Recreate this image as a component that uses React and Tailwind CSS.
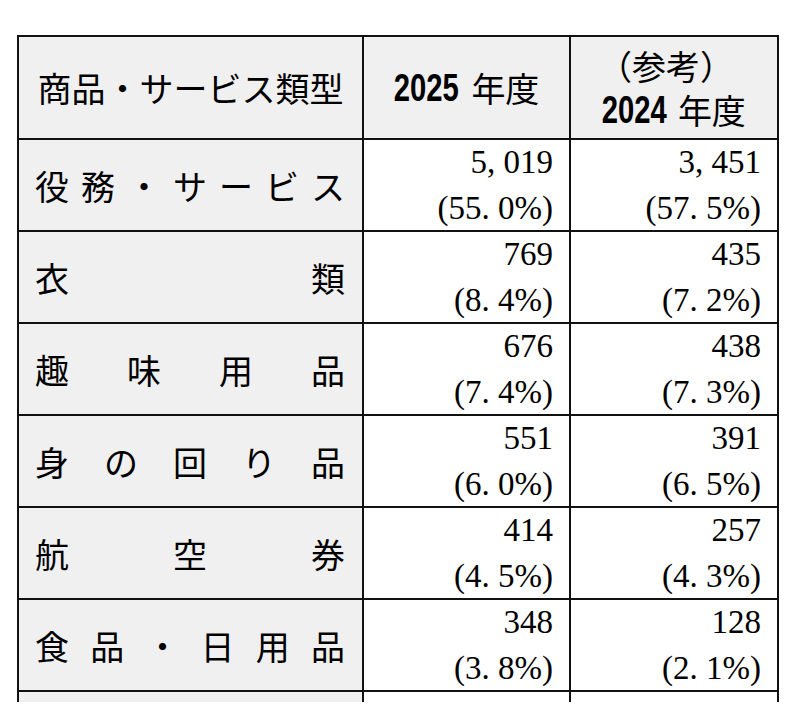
const rows = [
  { label: ['役', '務', '・', 'サ', 'ー', 'ビ', 'ス'], a: '5, 019', ap: ['55', '0'], b: '3, 451', bp: ['57', '5'] },
  { label: ['衣', '類'], a: '769', ap: ['8', '4'], b: '435', bp: ['7', '2'] },
  { label: ['趣', '味', '用', '品'], a: '676', ap: ['7', '4'], b: '438', bp: ['7', '3'] },
  { label: ['身', 'の', '回', 'り', '品'], a: '551', ap: ['6', '0'], b: '391', bp: ['6', '5'] },
  { label: ['航', '空', '券'], a: '414', ap: ['4', '5'], b: '257', bp: ['4', '3'] },
  { label: ['食', '品', '・', '日', '用', '品'], a: '348', ap: ['3', '8'], b: '128', bp: ['2', '1'] },
];

const gothic = "font-['Noto_Sans_CJK_JP',sans-serif]";
const mincho = "font-['Liberation_Serif','Noto_Sans_CJK_JP',serif]";

// condensed year digits
const Year = ({ children }) => (
  <span className="-ml-[22px] inline-block origin-right scale-x-[0.75] font-['Liberation_Sans',sans-serif] text-[39px] font-bold leading-none">
    {children}
  </span>
);

const Num = ({ value, pct }) => (
  <div className={`flex flex-col items-end justify-center border-r-2 border-b-2 border-[#111] bg-white pr-[16px] text-[33px] leading-[46px] text-black ${mincho}`}>
    <span>{value}</span>
    <span>
      ({pct[0]}
      <span className="inline-block w-[0.5em]">.</span>
      {pct[1]}%)
    </span>
  </div>
);

export default function App() {
  return (
    <div className="h-[719px] w-[800px] bg-white">
      <div className="h-[702px] overflow-hidden pl-[17px] pt-[35px]">
        <div className="grid w-[762px] grid-cols-[345px_207px_208px] grid-rows-[103px_repeat(7,92px)] border-l-2 border-t-2 border-[#111] text-black">
          <div className={`flex items-center justify-center border-r-2 border-b-2 border-[#111] bg-[#f0f0f0] text-[34px] ${gothic}`}>
            商品・サービス類型
          </div>
          <div className={`flex items-center justify-center border-r-2 border-b-2 border-[#111] bg-[#f0f0f0] text-[34px] ${gothic}`}>
            <Year>2025</Year>
            <span className="ml-[13px]">年度</span>
          </div>
          <div className={`flex flex-col items-center justify-center border-r-2 border-b-2 border-[#111] bg-[#f0f0f0] text-[34px] leading-[44px] ${gothic}`}>
            <span className="-ml-[16px]">（参考）</span>
            <span className="flex items-center">
              <Year>2024</Year>
              <span className="ml-[11px]">年度</span>
            </span>
          </div>

          {rows.map((r) => (
            <div key={r.label.join('')} className="contents">
              <div className={`flex items-center justify-between border-r-2 border-b-2 border-[#111] bg-[#f0f0f0] pl-[16px] pr-[17px] text-[34px] ${gothic}`}>
                {r.label.map((ch, i) => (
                  <span key={i}>{ch}</span>
                ))}
              </div>
              <Num value={r.a} pct={r.ap} />
              <Num value={r.b} pct={r.bp} />
            </div>
          ))}

          <div className="border-r-2 border-b-2 border-[#111] bg-[#f0f0f0]" />
          <div className="border-r-2 border-b-2 border-[#111] bg-white" />
          <div className="border-r-2 border-b-2 border-[#111] bg-white" />
        </div>
      </div>
    </div>
  );
}
